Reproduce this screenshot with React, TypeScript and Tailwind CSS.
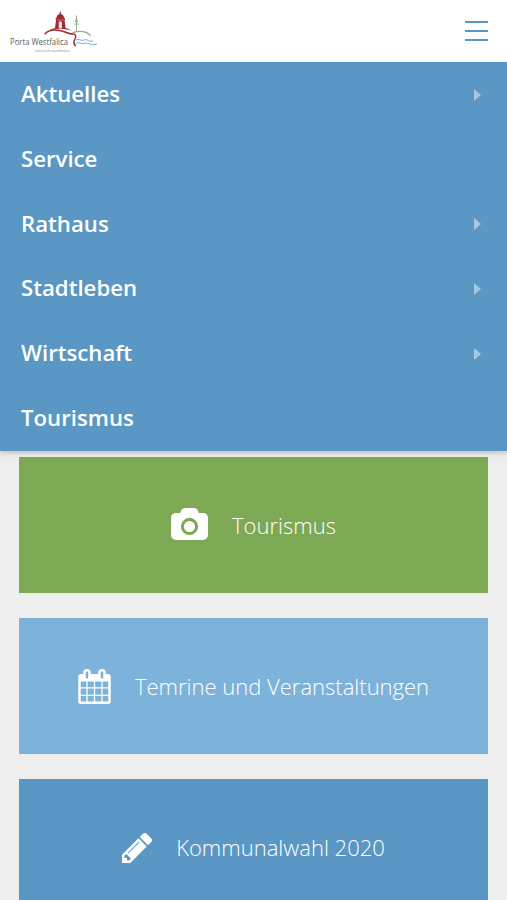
import React from 'react';

const menuItems = [
  { label: 'Aktuelles', hasChildren: true },
  { label: 'Service', hasChildren: false },
  { label: 'Rathaus', hasChildren: true },
  { label: 'Stadtleben', hasChildren: true },
  { label: 'Wirtschaft', hasChildren: true },
  { label: 'Tourismus', hasChildren: false },
];

const CameraIcon = () => (
  <svg className="mb-[3px] h-8 w-[37px] shrink-0" viewBox="0 0 1920 1664" fill="currentColor">
    <path d="M960 672q119 0 203.5 84.5t84.5 203.5-84.5 203.5-203.5 84.5-203.5-84.5-84.5-203.5 84.5-203.5 203.5-84.5zm704-416q106 0 181 75t75 181v896q0 106-75 181t-181 75h-1408q-106 0-181-75t-75-181v-896q0-106 75-181t181-75h224l51-136q19-49 69.5-84.5t103.5-35.5h512q53 0 103.5 35.5t69.5 84.5l51 136h224zm-704 1152q185 0 316.5-131.5t131.5-316.5-131.5-316.5-316.5-131.5-316.5 131.5-131.5 316.5 131.5 316.5 316.5 131.5z" />
  </svg>
);

const CalendarIcon = () => (
  <svg className="h-[35px] w-[33px] shrink-0" viewBox="64 0 1664 1792" fill="currentColor">
    <path d="M192 1664h288v-288h-288v288zm352 0h320v-288h-320v288zm-352-352h288v-320h-288v320zm352 0h320v-320h-320v320zm-352-384h288v-288h-288v288zm736 736h320v-288h-320v288zm-384-736h320v-288h-320v288zm768 736h288v-288h-288v288zm-384-352h320v-320h-320v320zm-352-864v-288q0-13-9.5-22.5t-22.5-9.5h-64q-13 0-22.5 9.5t-9.5 22.5v288q0 13 9.5 22.5t22.5 9.5h64q13 0 22.5-9.5t9.5-22.5zm736 864h288v-320h-288v320zm-384-384h320v-288h-320v288zm384 0h288v-288h-288v288zm32-480v-288q0-13-9.5-22.5t-22.5-9.5h-64q-13 0-22.5 9.5t-9.5 22.5v288q0 13 9.5 22.5t22.5 9.5h64q13 0 22.5-9.5t9.5-22.5zm384-64v1280q0 52-38 90t-90 38h-1408q-52 0-90-38t-38-90v-1280q0-52 38-90t90-38h128v-96q0-66 47-113t113-47h64q66 0 113 47t47 113v96h384v-96q0-66 47-113t113-47h64q66 0 113 47t47 113v96h128q52 0 90 38t38 90z" />
  </svg>
);

const PencilIcon = () => (
  <svg className="mt-px h-[30px] w-[30px] shrink-0" viewBox="128 149 1515 1515" fill="currentColor">
    <path d="M491 1536l91-91-235-235-91 91v107h128v128h107zm523-928q0-22-22-22-10 0-17 7l-542 542q-7 7-7 17 0 22 22 22 10 0 17-7l542-542q7-7 7-17zm-54-192l416 416-832 832h-416v-416zm683 96q0 53-37 90l-166 166-416-416 166-165q36-38 90-38 53 0 91 38l235 234q37 39 37 91z" />
  </svg>
);

const tiles = [
  { label: 'Tourismus', icon: <CameraIcon />, color: 'bg-[#7da954]' },
  { label: 'Temrine und Veranstaltungen', icon: <CalendarIcon />, color: 'bg-[#7db3da]' },
  { label: 'Kommunalwahl 2020', icon: <PencilIcon />, color: 'bg-[#5a97c4]' },
];

const Logo = () => (
  <svg className="h-[62px] w-[110px]" viewBox="0 0 110 62" fill="none">
    {/* monument */}
    <path
      d="M60.3 10.5l.9 3.5c2 .8 2.8 2 2.8 3.8l1.2 1-.6 1.4 1 7.8c2.2.4 4.5 1.3 6 2.6-7-2-15.6-2-22.6 0 1.5-1.3 3.7-2.2 6-2.6l1-7.8-.6-1.4 1.2-1c0-1.8.8-3 2.8-3.8z"
      fill="#a12c34"
    />
    <path d="M58.7 28.5v-5.3c0-2.6 3.3-2.6 3.3 0v5.3z" fill="#f1d9d9" />
    <path d="M56.8 20h7.2" stroke="#d49a9c" strokeWidth=".6" />
    <path
      d="M44.7 34.2c3-4 9-4.8 15-3.8 6 1 9 4 13 3.6 3.3-.2 3.6 2.4 2.2 5-1.5 2.6-1.6 4.8.8 7"
      stroke="#a12c34"
      strokeWidth="1.5"
    />
    {/* tower on the hill */}
    <path d="M76.4 15.5v15.5M74.2 24h4.4M75 22l1.4-3 1.4 3" stroke="#8eae84" strokeWidth="1" />
    <path d="M72 33c5-2.6 14-2.5 18.5 2.5" stroke="#8eae84" strokeWidth="1.3" />
    {/* river */}
    <path
      d="M76 40c2.5-1.5 4 .6 6.5.3s3.5-1.4 6 .2 3 .7 4.5.2M76 43.2c3-1.5 4.5.6 7 .3s4-1 6.5.3 5 .8 7.5.2"
      stroke="#69a7cb"
      strokeWidth=".9"
    />
    <text x="10" y="45.3" textLength="58" lengthAdjust="spacingAndGlyphs" fill="#5c5c5c" fontFamily="Open Sans, sans-serif" fontSize="9.4">Porta Westfalica</text>
    <text x="35" y="52" textLength="35" lengthAdjust="spacingAndGlyphs" fill="#8d8d8d" fontFamily="Open Sans, sans-serif" fontSize="4.2">natürlich wunderbar</text>
  </svg>
);

const App: React.FC = () => {
  return (
    <div className="flex h-[900px] w-full flex-col overflow-hidden bg-[#eeeeee] font-['Open_Sans',sans-serif] text-white">
      <header className="flex h-[62px] shrink-0 items-center justify-between bg-white pr-[19px]">
        <Logo />
        <button aria-label="Menu" className="flex w-[23px] flex-col gap-[7px]">
          <span className="h-[2px] bg-[#5a97c4]" />
          <span className="h-[2px] bg-[#5a97c4]" />
          <span className="h-[2px] bg-[#5a97c4]" />
        </button>
      </header>

      <nav className="relative z-10 shrink-0 bg-[#5a97c4] shadow-[0_2px_5px_rgba(0,0,0,0.2)]">
        <ul>
          {menuItems.map(item => (
            <li key={item.label} className="flex h-[64.8px] items-center justify-between pr-[26px] pl-[21px]">
              <a href="#" className="pb-[0.6px] text-[22.2px] leading-8 font-semibold">{item.label}</a>
              {item.hasChildren && (
                <svg className="mt-px h-3 w-[7px]" viewBox="0 0 7 12" fill="#a6c8df">
                  <path d="M0 0l7 6-7 6z" />
                </svg>
              )}
            </li>
          ))}
        </ul>
      </nav>

      <main className="flex flex-col gap-[24.5px] px-[19px] pt-[6.2px]">
        {tiles.map(tile => (
          <a
            key={tile.label}
            href="#"
            className={`flex h-[136.5px] shrink-0 items-center justify-center gap-6 ${tile.color}`}
          >
            {tile.icon}
            <span className="text-[22px] leading-8 font-light whitespace-nowrap">{tile.label}</span>
          </a>
        ))}
      </main>
    </div>
  );
};

export default App;
